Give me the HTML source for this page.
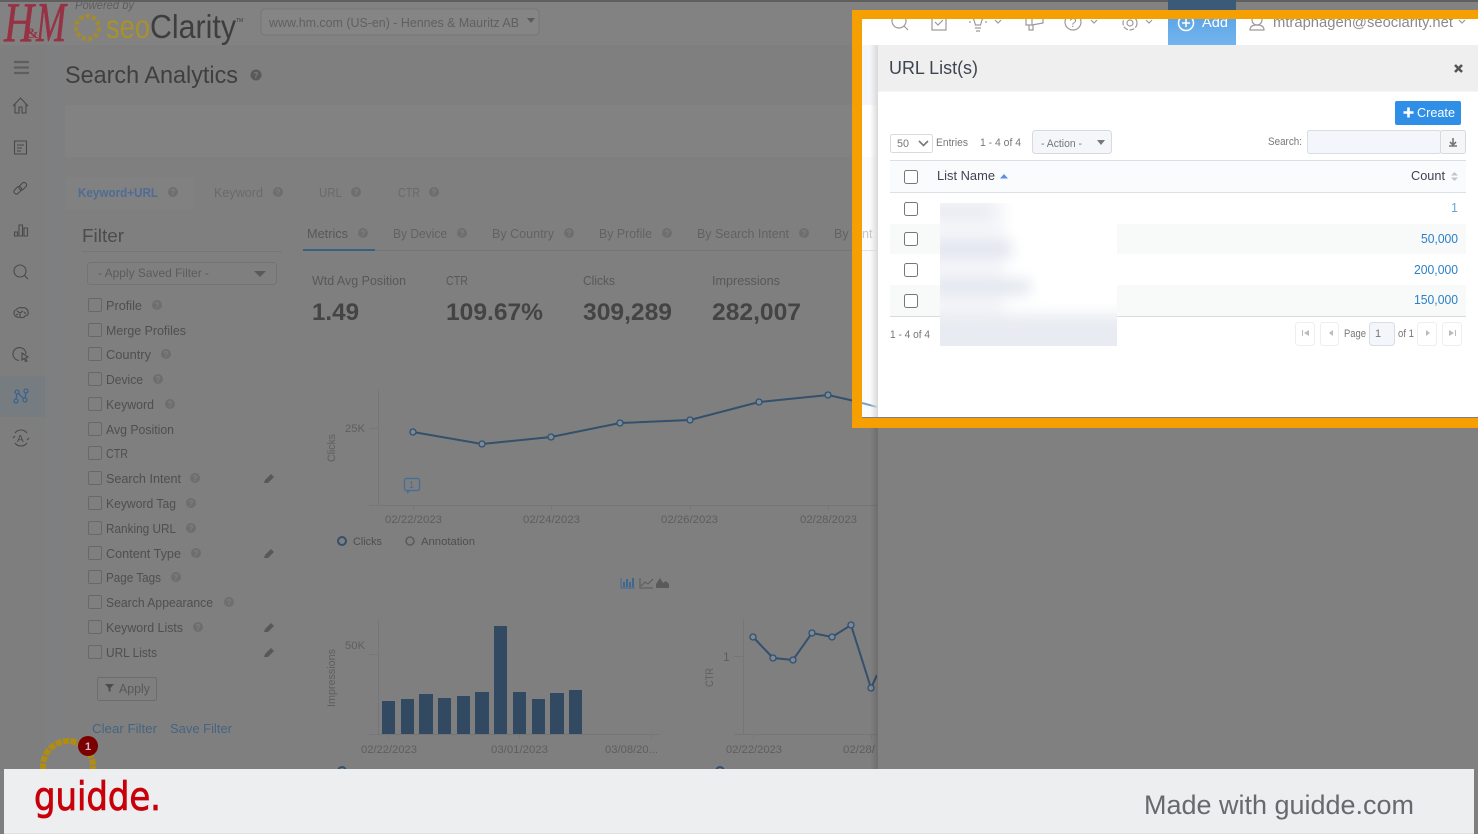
<!DOCTYPE html>
<html><head><meta charset="utf-8"><title>URL List(s)</title>
<style>
html,body{margin:0;padding:0;background:#7f7f7f;width:1478px;height:834px;overflow:hidden}
svg{display:block;position:absolute;left:0;top:0}
text{font-family:"Liberation Sans","DejaVu Sans",sans-serif}
.f{font-size:12.5px;fill:#4f4f4f}
.t{font-size:12.5px;fill:#585858}
.a{font-size:11px;fill:#5e5e5e}
.v{font-size:24px;font-weight:bold;fill:#444}
.h{font-size:8px;font-weight:bold;fill:#808080;text-anchor:middle}
.m{font-size:11px;fill:#777}
.c{font-size:12.5px;fill:#2b80c8;text-anchor:end}
.ic{fill:none;stroke:#4a4a4a;stroke-width:1.1}
.top{fill:none;stroke:#9a9a9a;stroke-width:1.2}
</style></head><body>
<svg width="1478" height="834" viewBox="0 0 1478 834" xmlns="http://www.w3.org/2000/svg">
<defs>
<filter id="b" x="-30%" y="-60%" width="160%" height="220%"><feGaussianBlur stdDeviation="7"/></filter>
<linearGradient id="sh" x1="0" x2="1" y1="0" y2="0"><stop offset="0" stop-color="#000" stop-opacity="0"/><stop offset="1" stop-color="#000" stop-opacity=".14"/></linearGradient>
<linearGradient id="sw" x1="0" x2="1" y1="0" y2="0"><stop offset="0" stop-color="#dcdcdc" stop-opacity="0"/><stop offset="1" stop-color="#d8d8d8"/></linearGradient>
<linearGradient id="add" x1="0" x2="0" y1="0" y2="1"><stop offset="0" stop-color="#5fa6e6"/><stop offset="1" stop-color="#74b4ee"/></linearGradient>
<clipPath id="dim"><rect x="0" y="0" width="877" height="769"/></clipPath>
<clipPath id="blurclip"><rect x="940" y="203" width="177" height="143"/></clipPath>
<clipPath id="wh"><rect x="862" y="19" width="616" height="26"/></clipPath>
</defs>

<!-- dim page -->
<rect width="1478" height="834" fill="#7f7f7f"/>
<rect width="1478" height="2" fill="#5f5f5f"/>
<rect y="2" width="1478" height="43" fill="#828282"/>
<rect y="45" width="45" height="724" fill="#7e7e7e"/>
<rect x="45" y="45" width="20" height="724" fill="#7e7f80"/>
<rect x="65" y="105" width="812" height="52" fill="#828282"/>
<rect x="65" y="177" width="129" height="33" fill="#818181"/>

<!-- logo -->
<text x="4" y="41" font-size="56" font-style="italic" fill="#963244" stroke="#963244" stroke-width=".7" textLength="30" lengthAdjust="spacingAndGlyphs" style='font-family:"Liberation Serif",serif'>H</text>
<text x="36" y="41" font-size="56" font-style="italic" fill="#963244" stroke="#963244" stroke-width=".7" textLength="30" lengthAdjust="spacingAndGlyphs" style='font-family:"Liberation Serif",serif'>M</text>
<text x="26" y="38" font-size="15" font-weight="bold" fill="#963244" style='font-family:"Liberation Serif",serif'>&amp;</text>
<text x="75" y="9" font-size="11.5" font-style="italic" fill="#5e5e5e" textLength="59" lengthAdjust="spacingAndGlyphs">Powered by</text>
<circle cx="87.500" cy="27.500" r="11.500" fill="none" stroke="#a38b30" stroke-width="4.500" stroke-dasharray="4 2.500"/>
<text x="106" y="38" font-size="33" fill="#a8912c" textLength="44" lengthAdjust="spacingAndGlyphs">seo</text>
<text x="150" y="38" font-size="33" fill="#3e3e3e" textLength="86" lengthAdjust="spacingAndGlyphs">Clarity</text>
<text x="236" y="22" font-size="5" fill="#3e3e3e">TM</text>
<rect x="261" y="9" width="278" height="26" rx="4" fill="#858585" stroke="#747679"/>
<text x="269" y="27" font-size="12.5" fill="#606060" textLength="250" lengthAdjust="spacingAndGlyphs">www.hm.com (US-en) - Hennes &amp; Mauritz AB</text>
<path d="M527 18h8l-4 5z" fill="#5c5c5c"/>

<!-- sidebar icons -->
<path d="M14 62h15M14 67.500h15M14 73h15" stroke="#5e5e5e" stroke-width="2.200" fill="none"/>
<path class="ic" d="M13 106l7.500-8 7.500 8M15 104v9h4v-6h3v6h4v-9"/>
<path class="ic" d="M14.500 141h12v13h-12zM17 145h7M17 148h5M17 151h4"/>
<path class="ic" d="M14.500 190l3-3a2.500 2.500 0 0 1 3.500 3.500l-3 3a2.500 2.500 0 0 1-3.500-3.500zM19.500 186l3-3a2.500 2.500 0 0 1 3.500 3.500l-3 3a2.500 2.500 0 0 1-3.500-3.500z"/>
<path class="ic" d="M14.500 232h3v4h-3zM19 225h3.500v11H19zM24 228h3.500v8H24z"/>
<circle class="ic" cx="20" cy="271" r="6"/><path class="ic" d="M24.500 275.500l3.500 3.500"/>
<path class="ic" d="M14 313c0-2 1-3 2-3 1-2 4-3 6-2 3-1 6 1 6 4 1 2-1 4-3 4-1 2-4 2-5 1-3 1-6-1-6-4zM17 311l3 2 3-2M20 313v4M24 312l2 2M16 315l2-1"/>
<path class="ic" d="M26 354a6.500 6.500 0 1 0-7 6.500"/><path class="ic" d="M22 353l6 4-2.500 1 1.500 3-1.500.5-1.500-3-2 1.500z"/>
<rect x="0" y="376" width="45" height="41" fill="#767c80"/>
<path d="M16 401l1-9 8 8 1-9" fill="none" stroke="#3a6590" stroke-width="1.300"/>
<g fill="#767c80" stroke="#3a6590" stroke-width="1.300"><circle cx="16" cy="401" r="2"/><circle cx="17" cy="392" r="2"/><circle cx="25" cy="400" r="2"/><circle cx="26" cy="391" r="2"/></g>
<path class="ic" d="M15 433a7.500 7.500 0 0 1 12 0M27 443a7.500 7.500 0 0 1-12 0M13 438l2-2M29 438l-2 2"/>
<text x="17" y="442" font-size="10" fill="#4a4a4a">A</text>

<!-- title -->
<text x="65" y="83" font-size="24" fill="#3f3f3f" textLength="173" lengthAdjust="spacingAndGlyphs">Search Analytics</text>
<circle cx="256" cy="75" r="5.500" fill="#5a5a5a"/><text x="256" y="78" class="h">?</text>

<!-- top tabs -->
<text x="78" y="197" font-size="12.5" font-weight="bold" fill="#4f6c95" textLength="80" lengthAdjust="spacingAndGlyphs">Keyword+URL</text>
<circle cx="173" cy="192" r="5" fill="#6e6e6e"/><text x="173" y="195" class="h">?</text>
<text x="214" y="197" class="t" style="fill:#6a6a6a" textLength="49" lengthAdjust="spacingAndGlyphs">Keyword</text>
<circle cx="278" cy="192" r="5" fill="#6e6e6e"/><text x="278" y="195" class="h">?</text>
<text x="319" y="197" class="t" style="fill:#6a6a6a" textLength="23" lengthAdjust="spacingAndGlyphs">URL</text>
<circle cx="356" cy="192" r="5" fill="#6e6e6e"/><text x="356" y="195" class="h">?</text>
<text x="398" y="197" class="t" style="fill:#6a6a6a" textLength="22" lengthAdjust="spacingAndGlyphs">CTR</text>
<circle cx="434" cy="192" r="5" fill="#6e6e6e"/><text x="434" y="195" class="h">?</text>

<!-- filter -->
<text x="82" y="242" font-size="18" fill="#4c4c4c" textLength="42" lengthAdjust="spacingAndGlyphs">Filter</text>
<rect x="82" y="251" width="200" height="1" fill="#74767a"/>
<rect x="87.500" y="262.500" width="189" height="22" rx="3" fill="#7f7f7f" stroke="#70747a"/>
<text x="98" y="277" font-size="12" fill="#5c5c5c" textLength="111" lengthAdjust="spacingAndGlyphs">- Apply Saved Filter -</text>
<path d="M254 271h12l-6 6z" fill="#5a5a5a"/>

<g fill="none" stroke="#686868">
<rect x="88.500" y="298.500" width="13" height="13" rx="1.500"/><rect x="88.500" y="323.500" width="13" height="13" rx="1.500"/><rect x="88.500" y="347.500" width="13" height="13" rx="1.500"/><rect x="88.500" y="372.500" width="13" height="13" rx="1.500"/><rect x="88.500" y="397.500" width="13" height="13" rx="1.500"/><rect x="88.500" y="422.500" width="13" height="13" rx="1.500"/><rect x="88.500" y="446.500" width="13" height="13" rx="1.500"/><rect x="88.500" y="471.500" width="13" height="13" rx="1.500"/><rect x="88.500" y="496.500" width="13" height="13" rx="1.500"/><rect x="88.500" y="521.500" width="13" height="13" rx="1.500"/><rect x="88.500" y="546.500" width="13" height="13" rx="1.500"/><rect x="88.500" y="570.500" width="13" height="13" rx="1.500"/><rect x="88.500" y="595.500" width="13" height="13" rx="1.500"/><rect x="88.500" y="620.500" width="13" height="13" rx="1.500"/><rect x="88.500" y="645.500" width="13" height="13" rx="1.500"/>
</g>
<text x="106" y="310" class="f" textLength="36" lengthAdjust="spacingAndGlyphs">Profile</text>
<text x="106" y="335" class="f" textLength="80" lengthAdjust="spacingAndGlyphs">Merge Profiles</text>
<text x="106" y="359" class="f" textLength="45" lengthAdjust="spacingAndGlyphs">Country</text>
<text x="106" y="384" class="f" textLength="37" lengthAdjust="spacingAndGlyphs">Device</text>
<text x="106" y="409" class="f" textLength="48" lengthAdjust="spacingAndGlyphs">Keyword</text>
<text x="106" y="434" class="f" textLength="68" lengthAdjust="spacingAndGlyphs">Avg Position</text>
<text x="106" y="458" class="f" textLength="22" lengthAdjust="spacingAndGlyphs">CTR</text>
<text x="106" y="483" class="f" textLength="75" lengthAdjust="spacingAndGlyphs">Search Intent</text>
<text x="106" y="508" class="f" textLength="70" lengthAdjust="spacingAndGlyphs">Keyword Tag</text>
<text x="106" y="533" class="f" textLength="70" lengthAdjust="spacingAndGlyphs">Ranking URL</text>
<text x="106" y="558" class="f" textLength="75" lengthAdjust="spacingAndGlyphs">Content Type</text>
<text x="106" y="582" class="f" textLength="55" lengthAdjust="spacingAndGlyphs">Page Tags</text>
<text x="106" y="607" class="f" textLength="107" lengthAdjust="spacingAndGlyphs">Search Appearance</text>
<text x="106" y="632" class="f" textLength="77" lengthAdjust="spacingAndGlyphs">Keyword Lists</text>
<text x="106" y="657" class="f" textLength="51" lengthAdjust="spacingAndGlyphs">URL Lists</text>

<g fill="#6e6e6e"><circle cx="157" cy="305" r="5"/><circle cx="166" cy="354" r="5"/><circle cx="158" cy="379" r="5"/><circle cx="170" cy="404" r="5"/><circle cx="195" cy="478" r="5"/><circle cx="191" cy="503" r="5"/><circle cx="191" cy="528" r="5"/><circle cx="196" cy="553" r="5"/><circle cx="176" cy="577" r="5"/><circle cx="229" cy="602" r="5"/><circle cx="198" cy="627" r="5"/></g>
<text x="157" y="308" class="h">?</text><text x="166" y="357" class="h">?</text><text x="158" y="382" class="h">?</text><text x="170" y="407" class="h">?</text><text x="195" y="481" class="h">?</text><text x="191" y="506" class="h">?</text><text x="191" y="531" class="h">?</text><text x="196" y="556" class="h">?</text><text x="176" y="580" class="h">?</text><text x="229" y="605" class="h">?</text><text x="198" y="630" class="h">?</text>

<g fill="#585858">
<path d="M264 483l1-3 6-6 3 3-6 6z"/><path d="M264 558l1-3 6-6 3 3-6 6z"/><path d="M264 632l1-3 6-6 3 3-6 6z"/><path d="M264 657l1-3 6-6 3 3-6 6z"/>
</g>

<rect x="97.500" y="677.500" width="59" height="23" rx="2" fill="none" stroke="#6c6c6c"/>
<path d="M105 684h9l-3.500 4v4l-2-1v-3z" fill="#4c4c4c"/>
<text x="119" y="693" font-size="12.500" fill="#585858" textLength="31" lengthAdjust="spacingAndGlyphs">Apply</text>
<text x="92" y="733" font-size="12.500" fill="#46647f" textLength="65" lengthAdjust="spacingAndGlyphs">Clear Filter</text>
<text x="170" y="733" font-size="12.500" fill="#46647f" textLength="62" lengthAdjust="spacingAndGlyphs">Save Filter</text>

<!-- metric tabs -->
<rect x="303" y="250" width="574" height="1" fill="#74767a"/>
<rect x="303" y="249" width="72" height="2" fill="#38607f"/>
<text x="307" y="238" class="t" textLength="41" lengthAdjust="spacingAndGlyphs">Metrics</text>
<text x="393" y="238" class="t" style="fill:#626262" textLength="54" lengthAdjust="spacingAndGlyphs">By Device</text>
<text x="492" y="238" class="t" style="fill:#626262" textLength="62" lengthAdjust="spacingAndGlyphs">By Country</text>
<text x="599" y="238" class="t" style="fill:#626262" textLength="53" lengthAdjust="spacingAndGlyphs">By Profile</text>
<text x="697" y="238" class="t" style="fill:#626262" textLength="92" lengthAdjust="spacingAndGlyphs">By Search Intent</text>
<text x="834" y="238" class="t" style="fill:#626262">By</text>
<g fill="#6e6e6e"><circle cx="363" cy="233" r="5"/><circle cx="462" cy="233" r="5"/><circle cx="569" cy="233" r="5"/><circle cx="667" cy="233" r="5"/><circle cx="804" cy="233" r="5"/></g>
<text x="363" y="236" class="h">?</text><text x="462" y="236" class="h">?</text><text x="569" y="236" class="h">?</text><text x="667" y="236" class="h">?</text><text x="804" y="236" class="h">?</text>

<!-- stats -->
<text x="312" y="285" class="t" textLength="94" lengthAdjust="spacingAndGlyphs">Wtd Avg Position</text>
<text x="446" y="285" class="t" textLength="22" lengthAdjust="spacingAndGlyphs">CTR</text>
<text x="583" y="285" class="t" textLength="32" lengthAdjust="spacingAndGlyphs">Clicks</text>
<text x="712" y="285" class="t" textLength="68" lengthAdjust="spacingAndGlyphs">Impressions</text>
<text x="312" y="320" class="v" textLength="47" lengthAdjust="spacingAndGlyphs">1.49</text>
<text x="446" y="320" class="v" textLength="97" lengthAdjust="spacingAndGlyphs">109.67%</text>
<text x="583" y="320" class="v" textLength="89" lengthAdjust="spacingAndGlyphs">309,289</text>
<text x="712" y="320" class="v" textLength="89" lengthAdjust="spacingAndGlyphs">282,007</text>

<!-- line chart -->
<g stroke="#74767a" fill="none">
<path d="M378.500 390v115M369 505.500h508M369 428.500h9M413.500 505v5M551.500 505v5M690.500 505v5M828.500 505v5"/>
<path d="M378.500 620v114M369 734.500h291M369 654.500h9M388.500 734v5M519.500 734v5M651.500 734v5"/>
<path d="M743.500 620v114M734 734.500h143M734 656.500h9M753.500 734v5M871.500 734v5"/>
</g>
<g clip-path="url(#dim)">
<path d="M413 432L482 444L551 437L620 423L690 420L759 402L828 395L877 406" fill="none" stroke="#33506d" stroke-width="2"/>
<g fill="#7a8a9a" stroke="#33506d" stroke-width="1.300"><circle cx="413" cy="432" r="3"/><circle cx="482" cy="444" r="3"/><circle cx="551" cy="437" r="3"/><circle cx="620" cy="423" r="3"/><circle cx="690" cy="420" r="3"/><circle cx="759" cy="402" r="3"/><circle cx="828" cy="395" r="3"/></g>
<path d="M753 637L773 658L793 660L812 633L832 637L851 625L871 688L877 675" fill="none" stroke="#33506d" stroke-width="2"/>
<g fill="#7a8a9a" stroke="#33506d" stroke-width="1.300"><circle cx="753" cy="637" r="3"/><circle cx="773" cy="658" r="3"/><circle cx="793" cy="660" r="3"/><circle cx="812" cy="633" r="3"/><circle cx="832" cy="637" r="3"/><circle cx="851" cy="625" r="3"/><circle cx="871" cy="688" r="3"/></g>
</g>
<text x="345" y="432" class="a" textLength="20" lengthAdjust="spacingAndGlyphs">25K</text>
<text transform="translate(335,462) rotate(-90)" class="a" textLength="28" lengthAdjust="spacingAndGlyphs">Clicks</text>
<rect x="404.500" y="478.500" width="15" height="12" rx="1.500" fill="none" stroke="#456e96" stroke-width="1.200"/>
<path d="M407 491v3l3-3z" fill="#456e96"/>
<text x="409" y="488" font-size="9" fill="#456e96">1</text>
<text x="385" y="523" class="a" textLength="57" lengthAdjust="spacingAndGlyphs">02/22/2023</text>
<text x="523" y="523" class="a" textLength="57" lengthAdjust="spacingAndGlyphs">02/24/2023</text>
<text x="661" y="523" class="a" textLength="57" lengthAdjust="spacingAndGlyphs">02/26/2023</text>
<text x="800" y="523" class="a" textLength="57" lengthAdjust="spacingAndGlyphs">02/28/2023</text>
<circle cx="342" cy="541" r="4" fill="none" stroke="#33506d" stroke-width="2"/>
<text x="353" y="545" class="a" style="fill:#4f4f4f" textLength="29" lengthAdjust="spacingAndGlyphs">Clicks</text>
<circle cx="410" cy="541" r="4" fill="none" stroke="#5c5c5c" stroke-width="1.600"/>
<text x="421" y="545" class="a" style="fill:#4f4f4f" textLength="54" lengthAdjust="spacingAndGlyphs">Annotation</text>

<!-- chart type icons -->
<g fill="#3c6890"><rect x="623" y="582" width="2" height="5"/><rect x="626" y="579" width="2" height="8"/><rect x="629" y="582" width="2" height="5"/><rect x="632" y="578" width="2" height="9"/></g>
<path d="M621 578v10h14" fill="none" stroke="#3c6890"/>
<path d="M640 578v10h13M641 586l4-4 3 2 5-5" fill="none" stroke="#5a5a5a"/>
<path d="M656 588h13v-4l-3-3-3 2-3-5-4 6z" fill="#5a5a5a"/>

<!-- bars -->
<g fill="#314a62"><rect x="382" y="701" width="13" height="33"/><rect x="401" y="699" width="13" height="35"/><rect x="419" y="694" width="14" height="40"/><rect x="438" y="698" width="13" height="36"/><rect x="457" y="696" width="13" height="38"/><rect x="475" y="692" width="14" height="42"/><rect x="494" y="626" width="13" height="108"/><rect x="513" y="692" width="13" height="42"/><rect x="532" y="699" width="13" height="35"/><rect x="550" y="693" width="14" height="41"/><rect x="569" y="690" width="13" height="44"/></g>
<text x="345" y="649" class="a" textLength="20" lengthAdjust="spacingAndGlyphs">50K</text>
<text transform="translate(335,707) rotate(-90)" class="a" textLength="58" lengthAdjust="spacingAndGlyphs">Impressions</text>
<text x="361" y="753" class="a" textLength="56" lengthAdjust="spacingAndGlyphs">02/22/2023</text>
<text x="491" y="753" class="a" textLength="57" lengthAdjust="spacingAndGlyphs">03/01/2023</text>
<text x="605" y="753" class="a" textLength="53" lengthAdjust="spacingAndGlyphs">03/08/20...</text>
<text x="723" y="661" class="a" style="font-size:12px">1</text>
<text transform="translate(713,687) rotate(-90)" class="a" textLength="19" lengthAdjust="spacingAndGlyphs">CTR</text>
<text x="726" y="753" class="a" textLength="56" lengthAdjust="spacingAndGlyphs">02/22/2023</text>
<text x="843" y="753" class="a" textLength="32" lengthAdjust="spacingAndGlyphs">02/28/</text>
<circle cx="342" cy="771" r="4" fill="none" stroke="#33506d" stroke-width="2"/>
<circle cx="720" cy="771" r="4" fill="none" stroke="#33506d" stroke-width="2"/>

<!-- gold badge -->
<circle cx="68" cy="766" r="25" fill="#808080" stroke="#b08c10" stroke-width="6" stroke-dasharray="6 1.500"/>
<circle cx="88" cy="746" r="10" fill="#7a0000"/>
<text x="88" y="750" font-size="11" font-weight="bold" fill="#d8b8d8" text-anchor="middle">1</text>

<!-- modal shadow dim side -->
<rect x="877" y="428" width="601" height="341" fill="#808080"/>
<rect x="870" y="428" width="8" height="341" fill="url(#sh)"/>

<!-- highlighted area -->
<rect x="862" y="19" width="616" height="398" fill="#fff"/>
<rect x="862" y="45" width="15" height="60" fill="#f4f6f9"/>
<rect x="862" y="157" width="15" height="260" fill="#fbfbfc"/>
<rect x="862" y="250" width="15" height="1" fill="#e0e0e0"/>
<text x="862" y="238" font-size="12.500" fill="#c4c4c4">nt</text>
<path d="M862 403l15 4" stroke="#7aa2c8" stroke-width="2"/>
<rect x="870" y="45" width="8" height="372" fill="url(#sw)"/>

<!-- top nav -->
<g clip-path="url(#wh)">
<rect x="1168" y="19" width="68" height="26" fill="url(#add)"/>
<circle class="top" cx="899" cy="21" r="7"/><path class="top" d="M904 26l4 4"/>
<rect class="top" x="932" y="16" width="14" height="14"/><path class="top" d="M935 22l3 3 5-5"/>
<path class="top" d="M974 20a5 5 0 1 1 8 0l-1.500 5h-5zM975 28h6M976 31h4M969 22h2M985 22h2M971 17l1 1M985 17l-1 1"/>
<path class="top" d="M995 20l3 3 3-3"/>
<path class="top" d="M1026 15h6v10h-6zM1032 17l11-3v9l-11 2M1029 25v5h4v-5"/>
<circle class="top" cx="1073" cy="22" r="8"/>
<text x="1073" y="27" font-size="13" fill="#999" text-anchor="middle">?</text>
<path class="top" d="M1091 20l3 3 3-3"/>
<circle class="top" cx="1130" cy="23" r="3"/>
<circle class="top" cx="1130" cy="23" r="7" stroke-dasharray="5 1.500"/>
<path class="top" d="M1146 20l3 3 3-3"/>
<circle cx="1186" cy="23" r="7.500" fill="none" stroke="#fff" stroke-width="1.500"/>
<path d="M1186 19v8M1182 23h8" stroke="#fff" stroke-width="1.500"/>
<text x="1202" y="27" font-size="14" fill="#fff" textLength="26" lengthAdjust="spacingAndGlyphs">Add</text>
<circle class="top" cx="1257" cy="20" r="5"/>
<path class="top" d="M1250 30c0-4 3-5 7-5s7 1 7 5z"/>
<text x="1273" y="27" font-size="15" fill="#8a8a8a" textLength="180" lengthAdjust="spacingAndGlyphs">mtraphagen@seoclarity.net</text>
<path class="top" d="M1459 20l3 3 3-3"/>
</g>

<!-- modal -->
<rect x="878" y="45" width="600" height="46" fill="#efefef"/>
<rect x="878" y="91" width="600" height="1" fill="#f6f6f6"/>
<text x="889" y="74" font-size="18" fill="#3f4550" textLength="89" lengthAdjust="spacingAndGlyphs">URL List(s)</text>
<path d="M1455 65l7 7M1462 65l-7 7" stroke="#555" stroke-width="2.600"/>

<rect x="1395" y="101" width="66" height="24" rx="2" fill="#2f8fe6"/>
<path d="M1408.500 107.500v10M1403.500 112.500h10" stroke="#fff" stroke-width="2.600"/>
<text x="1417" y="117" font-size="12.500" fill="#fff" textLength="38" lengthAdjust="spacingAndGlyphs">Create</text>

<rect x="890.500" y="134.500" width="42" height="18" rx="2" fill="#fff" stroke="#d8dadd"/>
<text x="897" y="147" class="m" textLength="12" lengthAdjust="spacingAndGlyphs">50</text>
<path d="M919 141l4.500 4.500 4.500-4.500" fill="none" stroke="#777" stroke-width="1.600"/>
<text x="936" y="146" class="m" textLength="32" lengthAdjust="spacingAndGlyphs">Entries</text>
<text x="980" y="146" class="m" textLength="41" lengthAdjust="spacingAndGlyphs">1 - 4 of 4</text>
<rect x="1032.500" y="130.500" width="79" height="23" rx="3" fill="#f4f6fa" stroke="#d8dadd"/>
<text x="1041" y="147" class="m" textLength="41" lengthAdjust="spacingAndGlyphs">- Action -</text>
<path d="M1097 140h8l-4 5z" fill="#777"/>
<text x="1268" y="145" class="m" textLength="34" lengthAdjust="spacingAndGlyphs">Search:</text>
<rect x="1307.500" y="130.500" width="133" height="23" rx="2" fill="#f3f6fb" stroke="#d8dde4"/>
<rect x="1440.500" y="130.500" width="25" height="23" rx="2" fill="#f5f6f8" stroke="#d8dadd"/>
<path d="M1453 138v6M1450 142l3 3 3-3M1449 146h8" fill="none" stroke="#777" stroke-width="1.600"/>

<rect x="890" y="160" width="576" height="33" fill="#fafbfd"/>
<rect x="890" y="160" width="576" height="1" fill="#dcdfe3"/>
<rect x="890" y="192" width="576" height="1" fill="#dcdfe3"/>
<rect x="904.500" y="170.500" width="13" height="13" rx="2" fill="#fff" stroke="#777"/>
<text x="937" y="180" font-size="12.500" fill="#3e4450" textLength="58" lengthAdjust="spacingAndGlyphs">List Name</text>
<path d="M1000 178.500h8l-4-4.500z" fill="#5b8ee6"/>
<text x="1411" y="180" font-size="12.500" fill="#3e4450" textLength="34" lengthAdjust="spacingAndGlyphs">Count</text>
<path d="M1451 175.500h7l-3.500-3.500zM1451 177.500h7l-3.500 3.500z" fill="#c4c4c4"/>

<rect x="890" y="224" width="576" height="30" fill="#f8f9f9"/>
<rect x="890" y="285" width="576" height="31" fill="#f8f9f9"/>
<rect x="890" y="316" width="576" height="1" fill="#d8dadd"/>
<rect x="904.500" y="202.500" width="13" height="13" rx="2" fill="#fff" stroke="#777"/>
<rect x="904.500" y="232.500" width="13" height="13" rx="2" fill="#fff" stroke="#777"/>
<rect x="904.500" y="263.500" width="13" height="13" rx="2" fill="#fff" stroke="#777"/>
<rect x="904.500" y="294.500" width="13" height="13" rx="2" fill="#fff" stroke="#777"/>

<text x="1458" y="212" class="c" style="fill:#6aa6dc">1</text>
<text x="1458" y="243" class="c" textLength="37" lengthAdjust="spacingAndGlyphs">50,000</text>
<text x="1458" y="274" class="c" textLength="44" lengthAdjust="spacingAndGlyphs">200,000</text>
<text x="1458" y="304" class="c" textLength="44" lengthAdjust="spacingAndGlyphs">150,000</text>

<!-- redaction blur -->
<g clip-path="url(#blurclip)">
<rect x="930" y="195" width="195" height="160" fill="#fff"/>
<g filter="url(#b)">
<rect x="930" y="196" width="74" height="120" fill="#f4f5f9"/>
<rect x="930" y="204" width="62" height="14" fill="#e8ebf2"/>
<rect x="930" y="241" width="82" height="16" fill="#e0e4ed"/>
<rect x="930" y="279" width="100" height="16" fill="#e2e6ee"/>
<rect x="925" y="314" width="210" height="50" fill="#e8ebf1"/>
</g>
</g>

<text x="890" y="338" class="m" textLength="40" lengthAdjust="spacingAndGlyphs">1 - 4 of 4</text>
<g fill="#fff" stroke="#eceef0"><rect x="1295.500" y="322.500" width="19" height="23" rx="3"/><rect x="1320.500" y="322.500" width="18" height="23" rx="3"/><rect x="1417.500" y="322.500" width="19" height="23" rx="3"/><rect x="1442.500" y="322.500" width="19" height="23" rx="3"/></g>
<path d="M1302 330v6h1v-6zM1304 333l5-3v6z" fill="#bbb"/>
<path d="M1333 330v6l-4-3z" fill="#bbb"/>
<path d="M1426 330v6l4-3z" fill="#bbb"/>
<path d="M1449 330l5 3-5 3zM1455 330v6h1v-6z" fill="#bbb"/>
<text x="1344" y="337" class="m" textLength="22" lengthAdjust="spacingAndGlyphs">Page</text>
<rect x="1369.500" y="322.500" width="25" height="23" rx="3" fill="#f3f6fb" stroke="#d8dde4"/>
<text x="1375" y="337" class="m">1</text>
<text x="1398" y="337" class="m" textLength="16" lengthAdjust="spacingAndGlyphs">of 1</text>

<!-- orange frame -->
<rect x="1168" y="0" width="68" height="10" fill="#3b5a78"/>
<path d="M852 10H1478V19H862V418H1478V428H852Z" fill="#f5a000"/>

<!-- footer -->
<rect x="4" y="769" width="1470" height="65" fill="#eceef0"/>
<rect x="4" y="833" width="1470" height="1" fill="#dfe1e3"/>
<text transform="translate(34,810) scale(1,1.15)" font-size="34" fill="#c8000a" stroke="#c8000a" stroke-width=".7" textLength="127" lengthAdjust="spacing" style='font-family:"DejaVu Sans",sans-serif'>guidde.</text>
<text x="1144" y="814" font-size="27" fill="#676a6d" textLength="270" lengthAdjust="spacingAndGlyphs">Made with guidde.com</text>
</svg>
</body></html>
